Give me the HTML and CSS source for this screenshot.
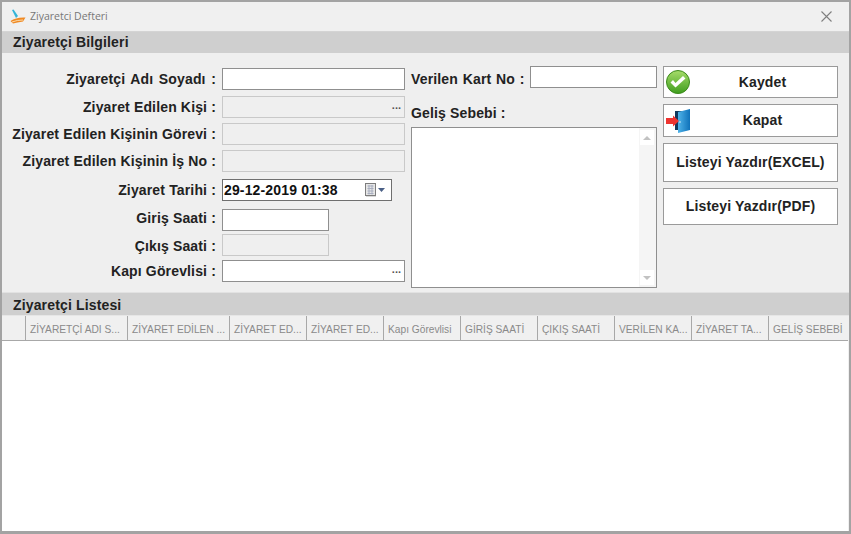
FILE: index.html

```html
<!DOCTYPE html>
<html lang="tr">
<head>
  <meta charset="UTF-8">
  <meta name="viewport" content="width=device-width, initial-scale=1.0">
  <title>Ziyaretci Defteri</title>
  <link rel="stylesheet" href="styles.css">
</head>
<body>
  <div class="window">
    <div class="title-bar">
      <svg class="app-icon" width="16" height="16" viewBox="0 0 16 16">
        <path d="M0.500 12 Q6 8 15.500 8.500 L13 12.500 Q7 13.500 3 14.500 Z" fill="#f08a24"/>
        <path d="M2 13 Q7 11 13 11" stroke="#fbd9a8" stroke-width="1" fill="none"/>
        <path d="M2 1 L3.500 0.500 L8 7 L6 9 Z" fill="#35b5d8"/>
      </svg>
      <span class="title-text">Ziyaretci Defteri</span>
      <svg class="close-icon" width="11" height="11" viewBox="0 0 11 11">
        <path d="M0.500 0.500 L10.500 10.500 M10.500 0.500 L0.500 10.500" stroke="#7f7f7f" stroke-width="1.100"/>
      </svg>
    </div>

    <div class="section-bar">Ziyaretçi Bilgileri</div>

    <div class="form-area">
      <div class="left-col">
        <div class="form-row"><label class="spaced">Ziyaretçi Adı Soyadı :</label><div class="field wide"></div></div>
        <div class="form-row"><label>Ziyaret Edilen Kişi :</label><div class="field wide off"><span class="dots">...</span></div></div>
        <div class="form-row"><label>Ziyaret Edilen Kişinin Görevi :</label><div class="field wide off"></div></div>
        <div class="form-row"><label>Ziyaret Edilen Kişinin İş No :</label><div class="field wide off"></div></div>
        <div class="form-row">
          <label>Ziyaret Tarihi :</label>
          <div class="field date">
            <span class="date-value">29-12-2019 01:38</span>
            <svg width="21" height="14" viewBox="0 0 21 14">
              <rect x="2" y="2" width="10" height="12" fill="#d9d9d9"/>
              <rect x="1.500" y="0.500" width="10" height="12" fill="#e6e6e6" stroke="#7d7d7d"/>
              <path d="M3.500 3 H9.500 M3.500 5.500 H9.500 M3.500 8 H9.500 M3.500 10.500 H9.500 M5 2 V11.500 M8 2 V11.500" stroke="#a9afc0" stroke-width="1"/>
              <path d="M14 5 H21 L17.500 9 Z" fill="#4a5f86"/>
            </svg>
          </div>
        </div>
        <div class="form-row"><label class="label-high">Giriş Saati :</label><div class="field short"></div></div>
        <div class="form-row"><label class="label-low">Çıkış Saati :</label><div class="field short off"></div></div>
        <div class="form-row"><label>Kapı Görevlisi :</label><div class="field wide"><span class="dots">...</span></div></div>
      </div>

      <div class="mid-col">
        <div class="card-row"><label>Verilen Kart No :</label><div class="field card"></div></div>
        <label class="memo-label">Geliş Sebebi :</label>
        <div class="memo">
          <div class="memo-scroll">
            <span class="scroll-btn"><i class="arrow-up"></i></span>
            <span class="scroll-btn"><i class="arrow-down"></i></span>
          </div>
        </div>
      </div>

      <div class="btn-col">
        <button class="btn btn-save">
          <svg width="24" height="24" viewBox="0 0 24 24">
            <defs>
              <linearGradient id="okGrad" x1="0" y1="0" x2="0" y2="1">
                <stop offset="0" stop-color="#a6dc6a"/>
                <stop offset="1" stop-color="#3f9e1e"/>
              </linearGradient>
            </defs>
            <circle cx="12" cy="12" r="11.500" fill="url(#okGrad)" stroke="#3c8a1c"/>
            <path d="M4.500 12.500 L9.500 17.500 L19.500 8.500 L17 6 L9.500 13 L7 10 Z" fill="#fff"/>
          </svg>
          <span>Kaydet</span>
        </button>
        <button class="btn btn-close">
          <svg width="24" height="24" viewBox="0 0 24 24">
            <defs>
              <linearGradient id="doorGrad" x1="0" y1="0" x2="1" y2="0">
                <stop offset="0" stop-color="#4fb2e8"/>
                <stop offset="1" stop-color="#0f72ba"/>
              </linearGradient>
            </defs>
            <path d="M9 2 H24 V21 H9 Z" fill="#12395e"/>
            <path d="M12 3 L24 0 V21 L12 24 Z" fill="url(#doorGrad)"/>
            <circle cx="14" cy="13" r="0.800" fill="#e8f3fa"/>
            <path d="M0 9 H7 V6.500 L13 12 L7 17.500 V15 H0 Z" fill="#ee3430"/>
          </svg>
          <span>Kapat</span>
        </button>
        <button class="btn btn-excel">Listeyi Yazdır(EXCEL)</button>
        <button class="btn btn-pdf">Listeyi Yazdır(PDF)</button>
      </div>
    </div>

    <div class="section-bar list-bar">Ziyaretçi Listesi</div>

    <div class="grid-head">
      <div class="col col-row"></div>
      <div class="col col-w">ZİYARETÇİ ADI S...</div>
      <div class="col col-w">ZİYARET EDİLEN ...</div>
      <div class="col">ZİYARET ED...</div>
      <div class="col">ZİYARET ED...</div>
      <div class="col">Kapı Görevlisi</div>
      <div class="col">GİRİŞ SAATİ</div>
      <div class="col">ÇIKIŞ SAATİ</div>
      <div class="col">VERİLEN KA...</div>
      <div class="col">ZİYARET TA...</div>
      <div class="col col-last">GELİŞ SEBEBİ</div>
    </div>
    <div class="grid-body"></div>
  </div>
</body>
</html>
```

FILE: styles.css

```css
* {
  margin: 0;
  padding: 0;
  box-sizing: border-box;
}
html, body {
  width: 851px;
  height: 534px;
  overflow: hidden;
  background-color: #f0f0f0;
  font-family: "Liberation Sans", Arial, sans-serif;
}
.window {
  width: 851px;
  height: 534px;
  border: 2px solid #a3a3a3;
  border-bottom-width: 3px;
  background-color: #f0f0f0;
  display: flex;
  flex-direction: column;
}

/* title bar */
.title-bar {
  height: 30px;
  flex: none;
  display: flex;
  align-items: center;
  padding: 0 17px 0 8px;
  border-bottom: 1px solid #d4d4d4;
}
.title-text {
  margin: 0 0 2px 4px;
  font-family: "Open Sans", sans-serif;
  font-size: 10.5px;
  color: #777;
}
.close-icon {
  margin-left: auto;
}

/* section headers */
.section-bar {
  height: 21px;
  flex: none;
  padding-left: 11px;
  background-color: #cfcfcf;
  font-size: 14px;
  font-weight: bold;
  letter-spacing: 0.15px;
  line-height: 21px;
  color: #222;
}
.list-bar {
  height: 23px;
  line-height: 24px;
  border-bottom: 1px solid #e6e6e6;
}

/* form */
.form-area {
  height: 240px;
  flex: none;
  display: flex;
  padding-top: 13px;
  background-color: #efefef;
  border-bottom: 1px solid #e2e2e2;
}
label {
  font-size: 14px;
  font-weight: bold;
  letter-spacing: 0.15px;
  color: #222;
  white-space: nowrap;
}
.field {
  height: 22px;
  border: 1px solid #8f8f8f;
  background-color: #fff;
  display: flex;
  align-items: center;
  justify-content: flex-end;
}
.field.off {
  background-color: #efefef;
  border-color: #c9c9c9;
}
.wide { width: 183px; }
.short { width: 107px; }
.dots {
  margin: 0 3px 4px 0;
  font-size: 11px;
  font-weight: bold;
  line-height: 10px;
  color: #555;
}
.left-col {
  width: 403px;
  padding-top: 2px;
  display: grid;
  grid-template-rows: 28px 27px 27px 29px 30px 25px 26px 22px;
}
.form-row {
  display: flex;
  align-items: flex-start;
}
.form-row label {
  width: 214px;
  margin-right: 6px;
  text-align: right;
  line-height: 22px;
}
.form-row .spaced { word-spacing: 1.5px; }
.form-row .label-high { line-height: 18px; }
.form-row .label-low { line-height: 24px; }
.date {
  width: 170px;
  border-color: #6f6f6f;
  justify-content: space-between;
  padding: 0 6px 0 1px;
}
.date-value {
  font-size: 14px;
  font-weight: bold;
  letter-spacing: 0.15px;
  color: #111;
}

.mid-col {
  width: 252px;
  padding-left: 6px;
  display: flex;
  flex-direction: column;
}
.card-row {
  display: flex;
  justify-content: space-between;
  line-height: 27px;
}
.card-row label { word-spacing: 0.7px; }
.card { width: 127px; }
.memo-label {
  margin-top: 9px;
  line-height: 22px;
}
.memo {
  width: 246px;
  height: 161px;
  margin-top: 3px;
  border: 1px solid #8f8f8f;
  background-color: #fff;
  display: flex;
  justify-content: flex-end;
}
.memo-scroll {
  width: 17px;
  background-color: #f5f5f5;
  padding: 2px 2px 2px 1px;
  display: flex;
  flex-direction: column;
  justify-content: space-between;
}
.scroll-btn {
  height: 15px;
  background-color: #fff;
  display: flex;
  align-items: center;
  justify-content: center;
}
.arrow-up, .arrow-down {
  border-left: 4px solid transparent;
  border-right: 4px solid transparent;
}
.arrow-up { border-bottom: 4px solid #c2c2c2; }
.arrow-down { border-top: 4px solid #c2c2c2; }

.btn-col {
  width: 175px;
  margin-left: 6px;
  display: flex;
  flex-direction: column;
  gap: 6px;
}
.btn {
  display: flex;
  align-items: center;
  justify-content: center;
  border: 1px solid #9a9a9a;
  background-color: #fff;
  font-family: "Liberation Sans", Arial, sans-serif;
  font-size: 14px;
  font-weight: bold;
  letter-spacing: 0.15px;
  color: #222;
}
.btn span { flex: 1; text-align: center; }
.btn svg { flex: none; }
.btn-save { height: 32px; padding: 0 2px; }
.btn-close { height: 33px; padding: 0 2px; }
.btn-close span { padding-bottom: 2px; }
.btn-excel { height: 39px; padding-bottom: 2px; }
.btn-pdf { height: 37px; padding-bottom: 2px; }

/* list */
.grid-head {
  height: 25px;
  flex: none;
  display: flex;
  background-color: #f0f0f0;
  border-bottom: 1px solid #a8a8a8;
  margin-right: 1px;
  font-size: 10.2px;
  color: #8a8a8a;
}
.col {
  width: 77px;
  flex: none;
  padding: 1px 0 0 4px;
  line-height: 25px;
  white-space: nowrap;
  overflow: hidden;
  border-right: 1px solid #a8a8a8;
}
.col-row { width: 24px; }
.col-w { width: 102px; }
.col-last { width: 79px; border-right: none; }
.grid-body {
  flex: 1;
  background-color: #fff;
  margin-right: 1px;
}
```
